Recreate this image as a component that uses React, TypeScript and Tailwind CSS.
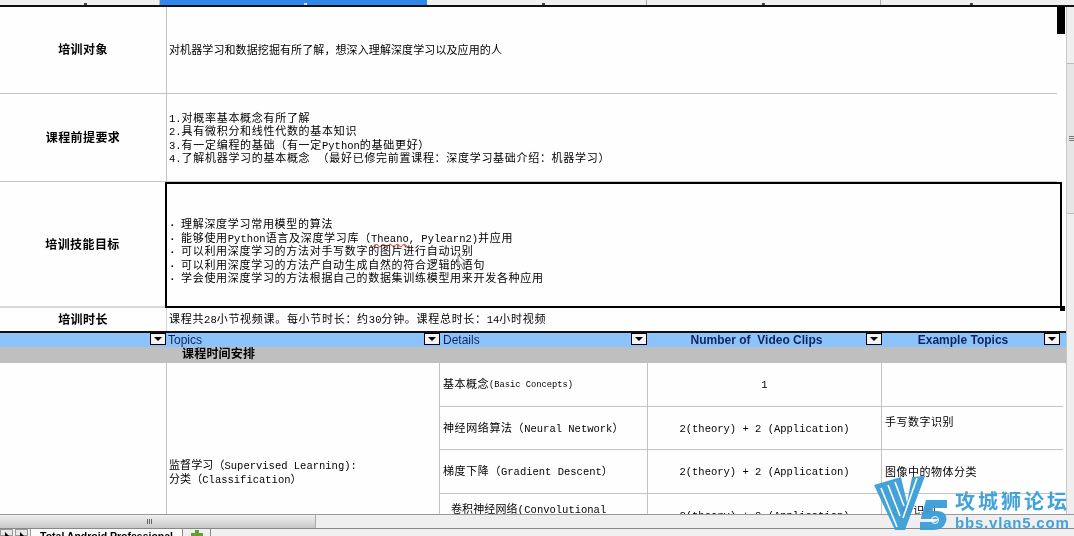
import React from "react";

const font = { fontFamily: '"Liberation Mono","Noto Sans CJK SC",monospace' };

function L({ children }: { children: React.ReactNode }) {
  return <span className="text-[10.5px] tracking-normal">{children}</span>;
}

function Caret({ right = "right-0" }: { right?: string }) {
  return (
    <span className={`absolute top-0 flex h-[12px] w-[16px] items-center justify-center border border-black bg-[#f4f4f4] ${right}`}>
      <span className="h-0 w-0 border-x-[4px] border-t-[4px] border-x-transparent border-t-black" />
    </span>
  );
}

function TopMark({ dark }: { dark?: boolean }) {
  return <span className={`mt-auto h-[2px] w-[3px] ${dark ? "bg-[#444]" : "bg-[#cfe4ff]"}`} />;
}

function Logo() {
  return (
    <div className="pointer-events-none absolute left-[870px] top-[470px] h-[66px] w-[204px] opacity-95">
      <svg width="85" height="66" viewBox="0 0 85 66" className="absolute left-0 top-0">
        <polygon points="4,15 31,7 37,33 42,7 55,6 35,60 25,60" fill="#3a9fd8" />
        <path d="M11 18 L27 57 M18 15 L30 46 M25 12 L34 36 M47 8 L33 48" stroke="#fff" strokeWidth="1.6" fill="none" />
        <path d="M77 34 H59 L56 45 H67 Q74 45 72 51 Q70 56 64 56 H50" stroke="#3a9fd8" strokeWidth="8" fill="none" />
        <circle cx="65" cy="50" r="3.5" stroke="#fff" strokeWidth="1" fill="none" />
      </svg>
      <div className="absolute left-[85px] top-[19px] whitespace-nowrap text-[20px] font-bold leading-[24px] tracking-[3px] text-[#3a9fd8]" style={{ fontFamily: '"Noto Sans CJK SC",sans-serif' }}>
        攻城狮论坛
      </div>
      <div className="absolute left-[85px] top-[44px] whitespace-nowrap text-[15px] font-bold leading-[18px] tracking-[0.8px] text-[#3a9fd8]" style={{ fontFamily: '"Liberation Sans",sans-serif' }}>
        bbs.vlan5.com
      </div>
    </div>
  );
}

function Cursor() {
  return (
    <svg width="12" height="17" viewBox="0 0 12 17" className="absolute left-[457px] top-[254px]">
      <path d="M1 1 L1 13 L4 10 L6 15 L8 14 L6 9 L10 9 Z" fill="#ffffffaa" stroke="#777" strokeWidth="1" />
    </svg>
  );
}

const rowLine = "border-b border-[#c4c4c4]";
const label = "flex items-center justify-center text-[12px] font-bold tracking-[0.4px]";

export default function App() {
  return (
    <div className="relative flex h-[536px] w-[1074px] flex-col overflow-hidden bg-[#fefefe] text-[11px] leading-[13.4px] tracking-[0.7px] text-black blur-[0.35px]" style={font}>
      {/* clipped column header strip */}
      <div className="grid h-[7px] shrink-0 grid-cols-[160px_267px_220px_234px_1fr] border-b-2 border-[#111] bg-[#f0f0f0]">
        <div className="flex justify-center border-r border-[#bbb] pl-[12px]"><TopMark dark /></div>
        <div className="flex justify-center bg-[#2f88ea] pl-[24px]"><TopMark /></div>
        <div className="flex justify-center border-r border-[#aaa] pl-[14px]"><TopMark dark /></div>
        <div className="flex justify-center border-r border-[#aaa]"><TopMark dark /></div>
        <div className="flex justify-center pr-[12px]"><TopMark dark /></div>
      </div>

      <div className="flex min-h-0 flex-1">
        <div className="min-w-0 flex-1 overflow-hidden">
          {/* Info rows */}
          <div className="grid h-[87px] grid-cols-[166px_1fr] pr-[9px]">
            <div className={`${label} pt-[4px] ${rowLine}`}>培训对象</div>
            <div className={`flex items-center border-l border-[#c4c4c4] pl-[2px] pt-[4px] tracking-[0.1px] ${rowLine}`}>对机器学习和数据挖掘有所了解，想深入理解深度学习以及应用的人</div>
          </div>
          <div className="grid h-[88px] grid-cols-[166px_1fr] pr-[9px]">
            <div className={`${label} pt-[5px] ${rowLine}`}>课程前提要求</div>
            <div className={`flex flex-col justify-center border-l border-[#c4c4c4] pl-[2px] pt-[4px] ${rowLine}`}>
              <div><L>1.</L>对概率基本概念有所了解</div>
              <div><L>2.</L>具有微积分和线性代数的基本知识</div>
              <div><L>3.</L>有一定编程的基础（有一定<L>Python</L>的基础更好）</div>
              <div><L>4.</L>了解机器学习的基本概念 （最好已修完前置课程：深度学习基础介绍：机器学习）</div>
            </div>
          </div>
          <div className="grid h-[126px] grid-cols-[165px_1fr] pr-[4px]">
            <div className={`${label} border-b-2 border-[#d8d8d8] pt-[6px]`}>培训技能目标</div>
            <div className="flex flex-col justify-center border-2 border-black pl-[2px] pt-[16px]">
              {[
                <>理解深度学习常用模型的算法</>,
                <>能够使用<L>Python</L>语言及深度学习库（<L><span className="underline decoration-wavy decoration-[#e05050]">Theano</span>, Pylearn2)</L>并应用</>,
                <>可以利用深度学习的方法对手写数字的图片进行自动识别</>,
                <>可以利用深度学习的方法产自动生成自然的符合逻辑的语句</>,
                <>学会使用深度学习的方法根据自己的数据集训练模型用来开发各种应用</>,
              ].map((t, i) => (
                <div key={i} className="flex">
                  <span className="w-[12px] shrink-0 font-bold">·</span>
                  <span>{t}</span>
                </div>
              ))}
            </div>
          </div>
          <div className="grid h-[25px] grid-cols-[166px_1fr] border-b-2 border-[#111] pr-[3px]">
            <div className={`${label} pt-[4px]`}>培训时长</div>
            <div className="flex items-center border-l border-[#d4d4d4] pl-[2px] pt-[3px]">课程共<L>28</L>小节视频课。每小节时长：约<L>30</L>分钟。课程总时长：<L>14</L>小时视频</div>
          </div>

          {/* Table header */}
          <div className="grid h-[14px] grid-cols-[166px_274px_207px_235px_181px] bg-[#8cc3fb] text-[12px] leading-[15px] tracking-normal text-[#10245c]" style={{ fontFamily: '"Liberation Sans",sans-serif' }}>
            <div className="relative"><Caret /></div>
            <div className="relative pl-[2px]">Topics<Caret /></div>
            <div className="relative pl-[3px]">Details<Caret /></div>
            <div className="relative pr-[16px] text-center font-bold">Number of&nbsp; Video Clips<Caret /></div>
            <div className="relative pr-[19px] text-center font-bold">Example Topics<Caret right="right-[3px]" /></div>
          </div>
          <div className="h-[16px] bg-[#bfbfbf] pl-[182px] pt-[1px] text-[12px] font-bold leading-[15px] tracking-[0.2px]">课程时间安排</div>

          {/* Schedule table */}
          <div className="grid grid-cols-[166px_274px_207px_234px_182px] grid-rows-[44px_43px_44px_44px_44px] tracking-[0.6px]">
            <div className="row-span-5" />
            <div className="row-span-5 flex flex-col justify-center border-x border-[#c4c4c4] pl-[2px] pt-[2px] tracking-[0.1px]">
              <div>监督学习（<L>Supervised Learning):</L></div>
              <div>分类（<L>Classification</L>）</div>
            </div>

            <div className={`flex items-center pl-[3px] pt-[3px] tracking-[0.5px] ${rowLine}`}>基本概念<span className="text-[8.75px] tracking-normal">(Basic Concepts)</span></div>
            <div className={`flex items-center justify-center border-l border-[#c4c4c4] pt-[3px] ${rowLine}`}><L>1</L></div>
            <div className={`border-l border-[#c4c4c4] ${rowLine}`} />

            <div className={`flex items-center pl-[3px] pt-[3px] ${rowLine}`}>神经网络算法（<L>Neural Network</L>）</div>
            <div className={`flex items-center justify-center border-l border-[#c4c4c4] pt-[3px] ${rowLine}`}><L>2(theory) + 2 (Application)</L></div>
            <div className={`border-l border-[#c4c4c4] pl-[3px] pt-[10px] tracking-[0.5px] ${rowLine}`}>手写数字识别</div>

            <div className={`flex items-center pl-[3px] pt-[3px] ${rowLine}`}>梯度下降（<L>Gradient Descent</L>）</div>
            <div className={`flex items-center justify-center border-l border-[#c4c4c4] pt-[3px] ${rowLine}`}><L>2(theory) + 2 (Application)</L></div>
            <div className={`border-l border-[#c4c4c4] pl-[3px] pt-[17px] tracking-[0.5px] ${rowLine}`}>图像中的物体分类</div>

            <div className={`flex flex-col justify-center pl-[11px] pt-[3px] tracking-[0.1px] ${rowLine}`}>
              <div>卷积神经网络(<L>Convolutional</L></div>
              <div><L>Neural Network</L>)</div>
            </div>
            <div className={`flex items-center justify-center border-l border-[#c4c4c4] pt-[3px] ${rowLine}`}><L>2(theory) + 8 (Application)</L></div>
            <div className={`border-l border-[#c4c4c4] pl-[8px] pt-[12px] ${rowLine}`}>人脸识别</div>

            <div className="col-span-3" />
          </div>
        </div>

        {/* Vertical scrollbar */}
        <div className="flex w-[8px] shrink-0 flex-col border-l border-[#c8c8c8] bg-[#efefef]">
          <div className="h-[56px]" />
          <div className="flex h-[151px] flex-col items-center justify-center gap-px border-y border-[#bbb] bg-[#e6e6e6] pl-[2px]">
            <span className="h-px w-full bg-[#777]" />
            <span className="h-px w-full bg-[#777]" />
            <span className="h-px w-full bg-[#777]" />
          </div>
        </div>
      </div>

      {/* Horizontal scrollbar */}
      <div className="flex h-[14px] shrink-0 border-t border-[#999] bg-[#efefef]">
        <div className="flex w-[316px] items-center justify-center gap-px border-r border-[#aaa] bg-gradient-to-b from-[#f0f0f0] to-[#c8c8c8] pr-[16px]">
          <span className="h-[5px] w-px bg-[#666]" />
          <span className="h-[5px] w-px bg-[#666]" />
          <span className="h-[5px] w-px bg-[#666]" />
        </div>
      </div>

      {/* Sheet tabs */}
      <div className="flex h-[8px] shrink-0 overflow-hidden border-t border-[#888] bg-[#f0f0f0]">
        <div className="flex w-[13px] justify-center border border-[#999] bg-[#e8e8e8]"><span className="mt-[2px] h-0 w-0 border-y-[4px] border-l-[4px] border-y-transparent border-l-black" /></div>
        <div className="ml-[2px] flex w-[13px] justify-center border border-[#999] bg-[#e8e8e8]"><span className="mt-[2px] h-0 w-0 border-y-[4px] border-l-[4px] border-y-transparent border-l-black" /></div>
        <div className="ml-[2px] w-[152px] whitespace-nowrap border-l border-[#999] bg-[#fafafa] pl-[9px] text-[10.5px] font-bold leading-[14px] tracking-normal" style={{ fontFamily: '"Liberation Sans",sans-serif' }}>Total Android Professional</div>
        <div className="flex w-[29px] justify-center border-x border-[#888] pt-[1px]">
          <svg width="12" height="8" viewBox="0 0 12 8"><path d="M4 0H8V3H12V7H8V8H4V7H0V3H4Z" fill="#5fa030" /></svg>
        </div>
      </div>

      {/* Selection marks lying over the sheet */}
      <div className="absolute left-[1057px] top-[6px] h-[28px] w-[8px] bg-black" />
      <div className="absolute left-[1060px] top-[306px] h-[5px] w-[5px] bg-black" />

      <Cursor />
      <Logo />
    </div>
  );
}
